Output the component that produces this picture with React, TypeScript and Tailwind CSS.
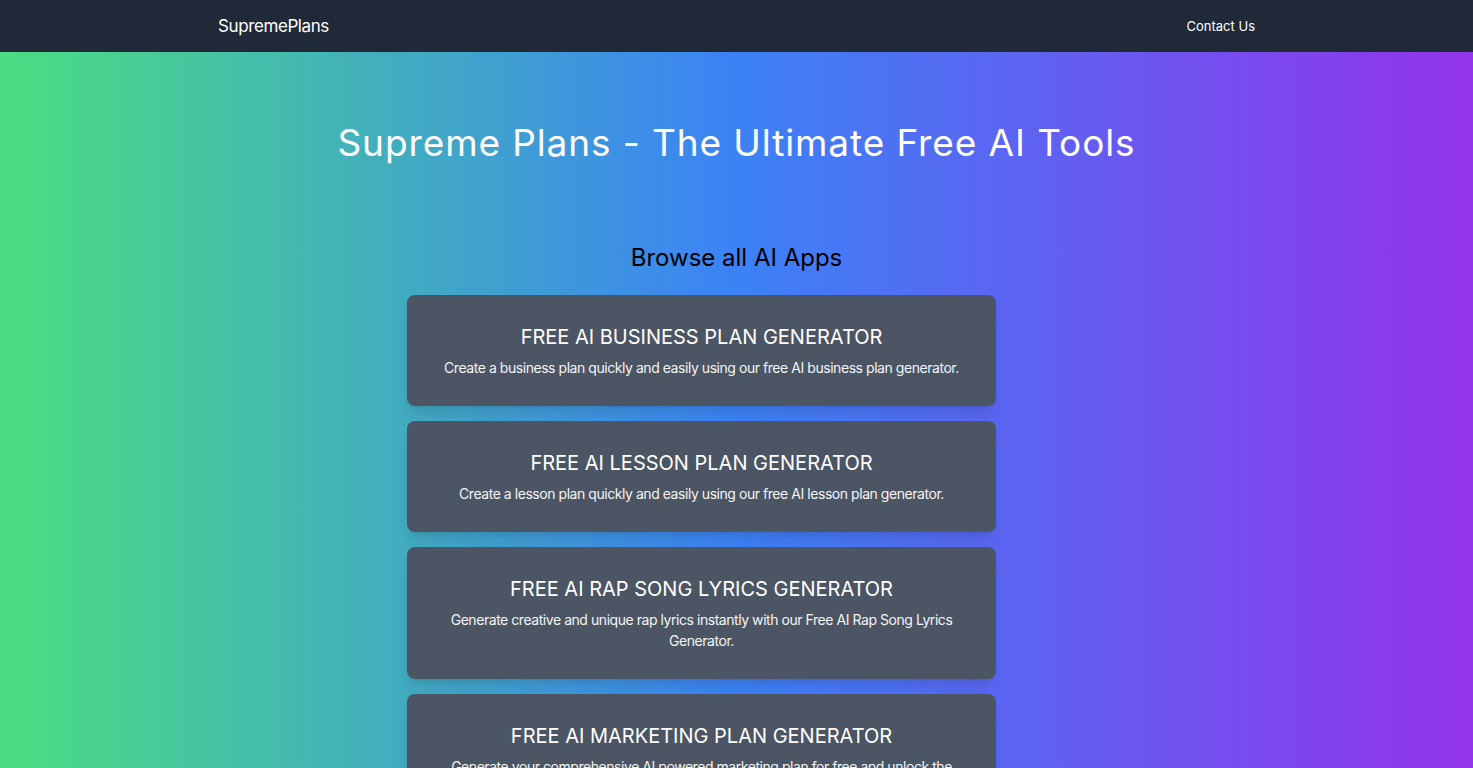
const apps = [
  {
    title: "Free AI Business Plan Generator",
    desc: "Create a business plan quickly and easily using our free AI business plan generator.",
  },
  {
    title: "Free AI Lesson Plan Generator",
    desc: "Create a lesson plan quickly and easily using our free AI lesson plan generator.",
  },
  {
    title: "Free AI Rap Song Lyrics Generator",
    desc: "Generate creative and unique rap lyrics instantly with our Free AI Rap Song Lyrics Generator.",
  },
  {
    title: "Free AI Marketing Plan Generator",
    desc: "Generate your comprehensive AI powered marketing plan for free and unlock the potential of your business.",
  },
  {
    title: "Free AI Cover Letter Generator",
    desc: "Write a professional cover letter in seconds with our free AI cover letter generator.",
  },
];

export default function App() {
  return (
    <div className="min-h-screen bg-linear-to-r/srgb from-[#4ade80] via-[#3b82f6] to-[#9333ea] font-['Inter',sans-serif]">
      <header className="bg-[#1f2937]">
        <div className="mx-auto flex h-[52px] w-[1037px] items-center justify-between pt-0.5">
          <a className="text-[17px] tracking-[-0.4px] text-white">SupremePlans</a>
          <a className="text-[13px] text-white">Contact Us</a>
        </div>
      </header>

      <main className="pb-16">
        <h1 className="pt-[72px] text-center text-[37px] leading-none tracking-[0.9px] text-white">
          Supreme Plans - The Ultimate Free AI Tools
        </h1>

        <h2 className="mt-[81px] text-center text-2xl leading-8 text-black">Browse all AI Apps</h2>

        <div className="mt-[21px] flex justify-center">
          <div className="mr-[70px] flex w-[589px] flex-col gap-[15px]">
            {apps.map((a) => (
              <a
                key={a.title}
                className="block rounded-lg bg-[#4b5563] px-9 py-7 text-center text-white shadow-lg"
              >
                <h3 className="text-xl uppercase leading-7">{a.title}</h3>
                <p className="mt-1.5 text-sm leading-[21px] tracking-[-0.45px] text-gray-100">{a.desc}</p>
              </a>
            ))}
          </div>
        </div>
      </main>
    </div>
  );
}
